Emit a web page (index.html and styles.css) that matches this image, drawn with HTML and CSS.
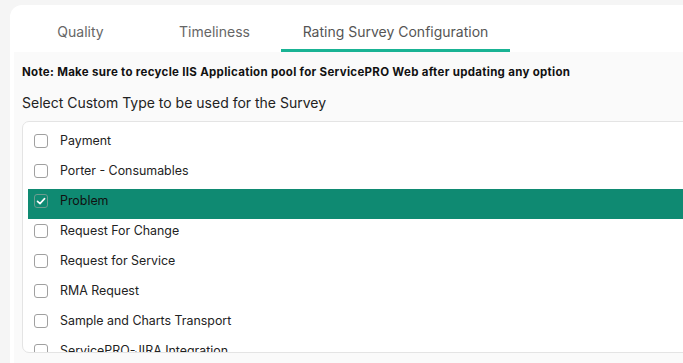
FILE: index.html
```html
<!DOCTYPE html>
<html lang="en">
<head>
  <meta charset="UTF-8" />
  <meta name="viewport" content="width=device-width, initial-scale=1.0">
  <title>Rating Survey Configuration</title>
  <link rel="stylesheet" href="styles.css">
</head>
<body>

  <main class="card">
    <nav class="tabs">
      <a class="tab tab-quality">Quality</a>
      <a class="tab tab-timeliness">Timeliness</a>
      <a class="tab tab-rating active">Rating Survey Configuration</a>
    </nav>

    <section class="content">
      <p class="note">Note: Make sure to recycle IIS Application pool for ServicePRO Web after updating any option</p>
      <h2 class="label">Select Custom Type to be used for the Survey</h2>

      <ul class="type-list">
        <li class="type-item"><span class="check"></span>Payment</li>
        <li class="type-item"><span class="check"></span>Porter - Consumables</li>
        <li class="type-item selected">
          <span class="check">
            <svg viewBox="0 0 14 14" width="14" height="14"><path d="M3.5 7.3 L6 9.6 L10.6 4.6" fill="none" stroke="#fff" stroke-width="1.6" stroke-linecap="round" stroke-linejoin="round"/></svg>
          </span>Problem
        </li>
        <li class="type-item"><span class="check"></span>Request For Change</li>
        <li class="type-item"><span class="check"></span>Request for Service</li>
        <li class="type-item"><span class="check"></span>RMA Request</li>
        <li class="type-item"><span class="check"></span>Sample and Charts Transport</li>
        <li class="type-item"><span class="check"></span>ServicePRO-JIRA Integration</li>
      </ul>
    </section>
  </main>

</body>
</html>
```

FILE: styles.css
```css
  html, body {
    height: 100%;
  }

  body {
    font-family: Inter, "Open Sans", sans-serif;
    background: #f5f5f5;
    margin: 0;
    color: #222;
    overflow: hidden;
  }

  .card {
    margin: 5px 0 0 10px;
    height: calc(100% - 5px);
    background: #fff;
    border-radius: 12px 0 0 0;
    padding-left: 4px;
    overflow: hidden;
    box-sizing: border-box;
    display: flex;
    flex-direction: column;
  }

  .tabs {
    display: flex;
    height: 47px;
    flex-shrink: 0;
    padding-left: 23px;
  }

  .tab {
    display: flex;
    align-items: center;
    justify-content: center;
    font-size: 14px;
    color: #666;
    height: 47px;
    box-sizing: border-box;
    padding-top: 5px;
  }

  .tab-quality {
    width: 87px;
    margin-right: 35px;
  }

  .tab-timeliness {
    width: 111px;
    margin-right: 11px;
  }

  .tab-rating {
    width: 229px;
  }

  .tab.active {
    color: #555;
    border-bottom: 3px solid #19b394;
    padding-top: 8px;
  }

  .content {
    flex: 1;
    background: #fafafa;
    padding: 10px 0 0 8px;
    min-height: 0;
    overflow: hidden;
  }

  .note {
    margin: 0;
    font-size: 11.5px;
    font-weight: 700;
    letter-spacing: 0.3px;
    color: #111;
    line-height: 20px;
    white-space: nowrap;
  }

  .label {
    margin: 11px 0 0;
    font-size: 14px;
    font-weight: 400;
    color: #222;
    line-height: 20px;
  }

  .type-list {
    list-style: none;
    width: 720px;
    margin: 8px 0 0;
    padding: 7px 0 0 5px;
    background: #fff;
    border: 1px solid #e4e4e4;
    border-radius: 7px;
    height: 223px;
    overflow: hidden;
  }

  .type-item {
    display: flex;
    align-items: center;
    gap: 12px;
    height: 30px;
    box-sizing: border-box;
    padding: 0 0 7px 6px;
    font-size: 12.4px;
    color: #222;
  }

  .check {
    width: 14px;
    height: 14px;
    border: 1px solid #a0a0a0;
    border-radius: 3px;
    box-sizing: border-box;
    display: flex;
    flex-shrink: 0;
  }

  .check svg {
    margin: -1px;
  }

  .type-item.selected {
    background: #0f8a72;
    color: #111;
  }

  .type-item.selected .check {
    border-color: #6d9d90;
  }
```
